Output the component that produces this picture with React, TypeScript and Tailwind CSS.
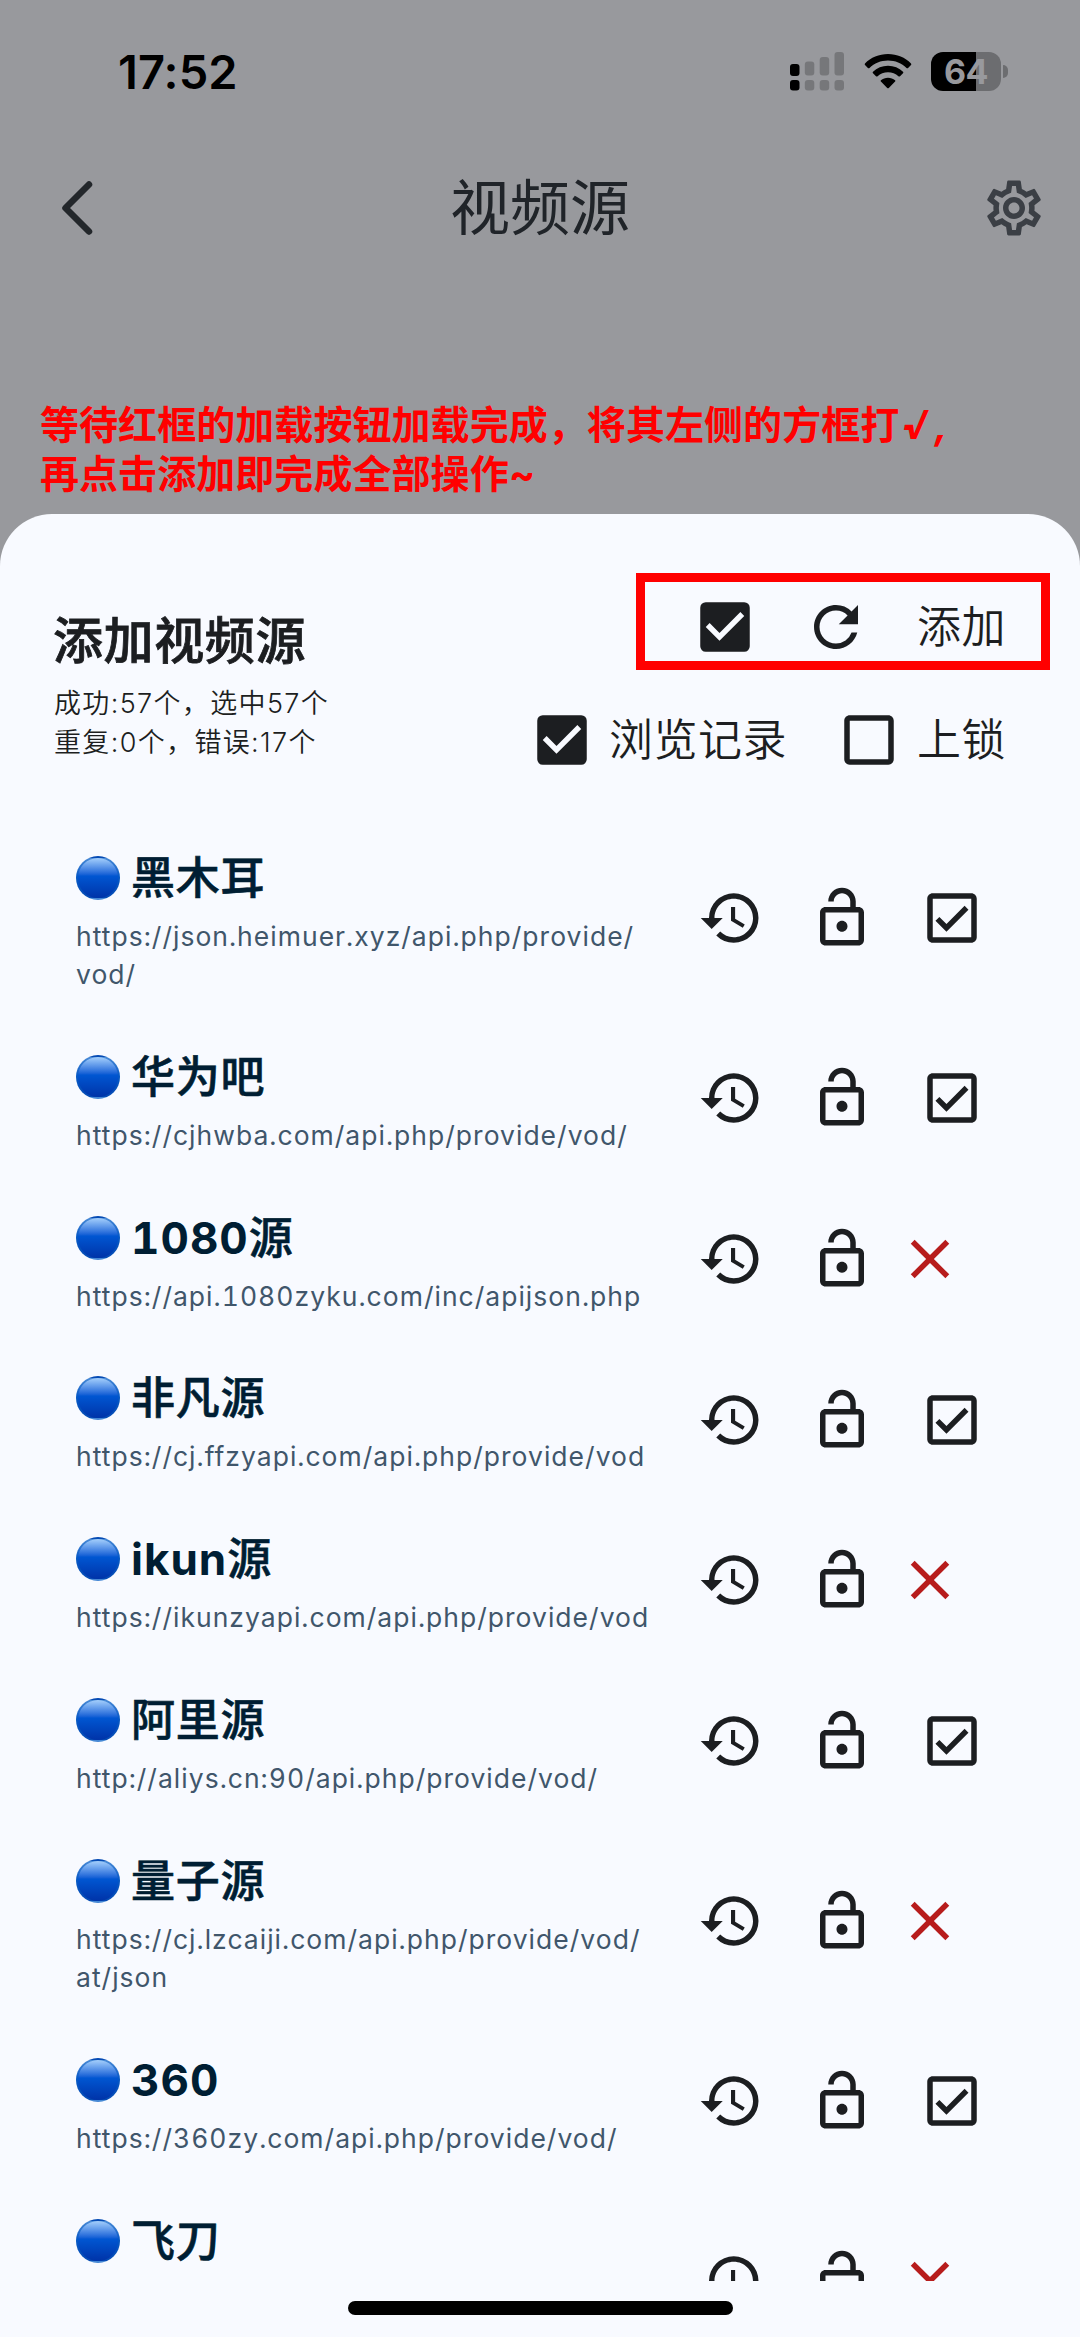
import { useState } from 'react';
import {
  MdCheckBox,
  MdCheckBoxOutlineBlank,
  MdClose,
  MdHistory,
  MdOutlineCheckBox,
  MdOutlineLockOpen,
  MdOutlineSettings,
  MdRefresh,
} from 'react-icons/md';

// latin is the part of the name before the Chinese characters
type Source = { latin?: string; name: string; url: string; ok: boolean };

const sources: Source[] = [
  { name: '黑木耳', url: 'https://json.heimuer.xyz/api.php/provide/\nvod/', ok: true },
  { name: '华为吧', url: 'https://cjhwba.com/api.php/provide/vod/', ok: true },
  { latin: '1080', name: '源', url: 'https://api.1080zyku.com/inc/apijson.php', ok: false },
  { name: '非凡源', url: 'https://cj.ffzyapi.com/api.php/provide/vod', ok: true },
  { latin: 'ikun', name: '源', url: 'https://ikunzyapi.com/api.php/provide/vod', ok: false },
  { name: '阿里源', url: 'http://aliys.cn:90/api.php/provide/vod/', ok: true },
  { name: '量子源', url: 'https://cj.lzcaiji.com/api.php/provide/vod/\nat/json', ok: false },
  { latin: '360', name: '', url: 'https://360zy.com/api.php/provide/vod/', ok: true },
  { name: '飞刀', url: '\n\n', ok: false },
];

function StatusBar() {
  return (
    <div className="flex h-[144px] items-start justify-between pl-[118px] pr-[72px] pt-[42px] text-black">
      <span className="text-[47px] font-semibold leading-[60px] tracking-[0.1px]">17:52</span>
      <div className="flex pt-[10px]">
        <svg width="54" height="39" viewBox="0 0 54 39" className="mr-[20px]">
          <rect x="0" y="12" width="9.5" height="12" rx="3" />
          <rect x="0" y="28" width="9.5" height="10.5" rx="3" />
          <g fillOpacity="0.22">
            <rect x="14.8" y="9.5" width="9.5" height="14" rx="3" />
            <rect x="14.8" y="28" width="9.5" height="10.5" rx="3" />
            <rect x="29.7" y="5" width="9.5" height="18.5" rx="3" />
            <rect x="29.7" y="28" width="9.5" height="10.5" rx="3" />
            <rect x="44.5" y="0" width="9.5" height="23.5" rx="3" />
            <rect x="44.5" y="28" width="9.5" height="10.5" rx="3" />
          </g>
        </svg>
        <svg width="48" height="39" viewBox="0 0 48 39" className="mr-[19px]">
          <path d="M24 2C15 2 6.800 5.500 1 11.500Q0.300 12.300 1 13.100L3.900 16Q4.700 16.700 5.500 16C10.300 11.300 16.800 8.600 24 8.600S37.700 11.300 42.500 16Q43.300 16.700 44.100 16L47 13.100Q47.700 12.300 47 11.500C41.200 5.500 33 2 24 2Z" />
          <path d="M24 13.800C18.200 13.800 12.900 16 9 19.700Q8.200 20.500 9 21.300L12 24.200Q12.800 24.900 13.600 24.200C16.300 21.800 20 20.300 24 20.300S31.700 21.800 34.400 24.200Q35.200 24.900 36 24.200L39 21.300Q39.800 20.500 39 19.700C35.100 16 29.800 13.800 24 13.800Z" />
          <path d="M24 25.700C21.300 25.700 18.800 26.600 16.900 28.200Q16.200 28.900 16.900 29.600L23.200 36Q24 36.700 24.800 36L31.100 29.600Q31.800 28.900 31.100 28.200C29.200 26.600 26.700 25.700 24 25.700Z" />
        </svg>
        <div className="flex items-center">
          <div className="flex h-[39px] w-[70px] items-center justify-center rounded-[12px] bg-linear-to-r from-black from-[64%] to-[#6c6d70] to-[64%]">
            <span className="text-[34px] font-bold leading-[39px] tracking-[-0.5px] text-[#98999d]">64</span>
          </div>
          <div className="ml-[2px] h-[13px] w-[5px] rounded-r-full bg-[#6c6d70]" />
        </div>
      </div>
    </div>
  );
}

function TitleBar() {
  return (
    <div className="flex h-[127px] items-center justify-between pl-[60px] pr-[33px]">
      <svg width="66" height="60" viewBox="0 0 66 60" fill="none" stroke="#23272b" strokeWidth="6.500" strokeLinecap="round" strokeLinejoin="round">
        <path d="M29 6.500L5.500 30L29 53.500" />
      </svg>
      <h1 className="ml-[-27px] text-[60px] font-normal leading-[80px] text-[#202429]">视频源</h1>
      <MdOutlineSettings size={66} color="#3b3f45" />
    </div>
  );
}

function SourceRow({ latin, name, url, ok }: Source) {
  return (
    <li className="flex items-center pl-[76px]">
      <div className="w-[600px] pb-[24px] pt-[29px]">
        <div className="flex h-[60px] items-center">
          <span className="h-[44px] w-[44px] shrink-0 rounded-full border-2 border-[#0a5bbd]/60 bg-linear-to-b from-[#a5cffb] via-[#0056d2] via-45% to-[#0033a8]" />
          <span className="ml-[11px] text-[44px] font-medium tracking-[0.8px] text-[#001e33]">
            {latin && <span className="font-bold tracking-[1px] tabular-nums">{latin}</span>}
            <span className="[-webkit-text-stroke:0.6px]">{name}</span>
          </span>
        </div>
        <p className="mt-[9px] min-h-[38.7px] whitespace-pre text-[26.5px] leading-[38.7px] tracking-[1.02px] tabular-nums text-[#40566b]">{url}</p>
      </div>
      <span className="flex w-[110.6px] justify-center"><MdHistory size={66} /></span>
      <span className="flex w-[110.6px] justify-center"><MdOutlineLockOpen size={66} /></span>
      {ok ? (
        <span className="flex w-[110.6px] justify-center"><MdOutlineCheckBox size={66} /></span>
      ) : (
        <MdClose size={66} color="#b71c1c" />
      )}
    </li>
  );
}

export default function App() {
  const [history, setHistory] = useState(true);
  const [locked, setLocked] = useState(false);

  return (
    <div className="relative flex h-[2337px] w-[1080px] flex-col overflow-hidden bg-[#98999d] font-['Inter','Noto_Sans_CJK_SC',sans-serif]">
      <StatusBar />
      <TitleBar />
      <p className="ml-[40px] mt-[129px] h-[114px] whitespace-nowrap text-[39px] font-bold leading-[49px] tracking-[0.06px] text-[#ff0000]">
        等待红框的加载按钮加载完成，将其左侧的方框打<span className="ml-[2px] text-[40px] font-extrabold italic leading-none">√</span>
        <span className="ml-[6px] italic">,</span>
        <br />
        再点击添加即完成全部操作~
      </p>

      <main className="flex min-h-0 flex-1 flex-col rounded-t-[52px] bg-[#f8faff] text-[#1c1e21]">
        <header className="flex h-[304.6px] shrink-0 justify-between pl-[54px] pr-[74px]">
          <div className="pt-[97px]">
            <h2 className="-ml-px text-[50px] font-medium leading-[60px] tracking-[0.6px] [-webkit-text-stroke:0.8px]">添加视频源</h2>
            <p className="mt-[14px] whitespace-nowrap text-[27px] font-[350] leading-[38.7px] tracking-[1.35px]">
              成功:57个，选中57个
              <br />
              重复:0个，错误:17个
            </p>
          </div>
          <div className="flex flex-col items-end pt-[79.600px]">
            <div className="flex h-[66px] items-center">
              <button className="flex w-[110.6px] justify-center"><MdCheckBox size={66} /></button>
              <button className="flex w-[110.6px] justify-center"><MdRefresh size={66} /></button>
              <button className="ml-[26px] text-[44px] font-[350] leading-[66px] tracking-[0.5px]">添加</button>
            </div>
            <div className="mt-[47.400px] flex h-[66px] items-center text-[44px] font-[350] leading-[66px] tracking-[0.5px]">
              <button className="flex items-center gap-[14px]" onClick={() => setHistory(!history)}>
                {history ? <MdCheckBox size={66} /> : <MdCheckBoxOutlineBlank size={66} />}
                浏览记录
              </button>
              <button className="ml-[49px] flex items-center gap-[15px]" onClick={() => setLocked(!locked)}>
                {locked ? <MdCheckBox size={66} /> : <MdCheckBoxOutlineBlank size={66} />}
                上锁
              </button>
            </div>
          </div>
        </header>

        <ul className="min-h-0 flex-1 overflow-hidden">
          {sources.map((s) => (
            <SourceRow key={s.url} {...s} />
          ))}
        </ul>

        {/* home indicator */}
        <div className="flex h-[56px] shrink-0 justify-center pt-[20px]">
          <div className="h-[14px] w-[385px] rounded-full bg-black" />
        </div>
      </main>

      {/* highlight over the header actions */}
      <div className="pointer-events-none absolute left-[636px] top-[573px] h-[97px] w-[414px] border-[9px] border-[#ff0000]" />
    </div>
  );
}
